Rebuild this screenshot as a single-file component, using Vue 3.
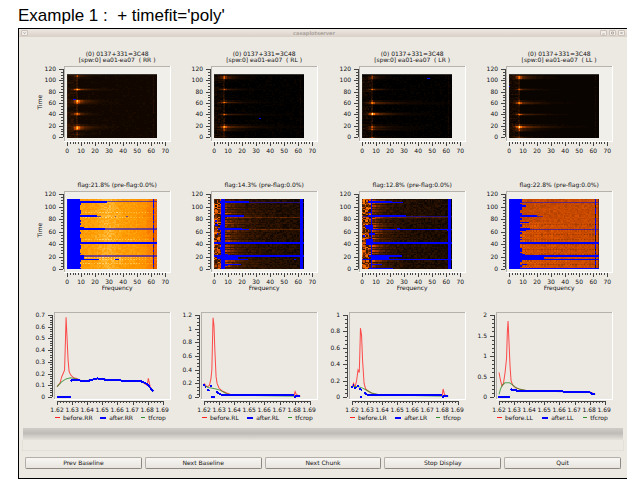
<script setup>
const CHANNELS = 64;
const ROWS = 56; // two time steps per drawn row

const range = (from, to, step) => {
  const arr = [];
  for (let i = 0; i <= Math.round((to - from) / step); i++) {
    arr.push(from + i * step);
  }
  return arr;
};

const noise = (a, b, seed) => {
  const v = Math.sin(a * 12.9898 + b * 78.233 + seed * 37.719) * 43758.5453;
  return v - Math.floor(v);
};

// black -> brown -> orange -> pale yellow
const stops = [
  [0, 0, 0, 0],
  [0.3, 84, 34, 0],
  [0.5, 200, 72, 0],
  [0.65, 250, 112, 0],
  [0.8, 255, 158, 0],
  [1, 255, 250, 190],
];
const heatColor = (value) => {
  const v = Math.min(1, Math.max(0, value));
  let i = 1;
  while (i < stops.length - 1 && stops[i][0] < v) i++;
  const a = stops[i - 1];
  const b = stops[i];
  const k = (v - a[0]) / (b[0] - a[0]);
  const mix = (n) => Math.round(a[n] + (b[n] - a[n]) * k);
  return `rgb(${mix(1)},${mix(2)},${mix(3)})`;
};

// cells with the same level share one path
const paint = (valueAt) => {
  const levels = {};
  for (let r = 0; r < ROWS; r++) {
    for (let c = 0; c < CHANNELS; c++) {
      const v = valueAt(c, 111 - r * 2, r);
      const level = Math.round(Math.min(1, Math.max(0, v)) * 32);
      levels[level] = (levels[level] || "") + `M${c} ${r}h1v1h-1z`;
    }
  }
  return Object.keys(levels).map((level) => ({
    fill: heatColor(level / 32),
    d: levels[level],
  }));
};

// sources: [time, strength, reach in channels]
const rawValue = (base, sources, seed) => (c, t, r) => {
  let v = base + (noise(c, r, seed) - 0.5) * 0.02;
  if (c < 6) v += noise(c, r, seed + 1) * 0.12 * (noise(r, 2, seed) + 0.2);
  if (c >= 6 && c <= 7) v += 0.04 + noise(c, r, seed + 2) * 0.14;
  if (c === 61) v += noise(c, r, seed) * 0.08;
  sources.forEach(([time, strength, reach]) => {
    const near = Math.abs(t - time);
    if (near > 3) return;
    const fade = near <= 1 ? 1 : 0.3;
    const d = Math.abs(c - 7);
    v += strength * fade * (d < 2 ? 1 - d * 0.25 : 0);
    if (d >= 2) v += strength * fade * 0.5 * Math.exp(-(d - 2) / (c < 7 ? 2 : reach));
  });
  return v;
};

const brightValue = (c, t, r) => {
  let v = 0.79 + (noise(c, r, 5) - 0.5) * 0.06;
  v += 0.05 * Math.exp(-Math.pow((c - 29) / 8, 2));
  if (c > 46) v -= (c - 46) * 0.004;
  if (c > 56) v -= 0.03;
  if (c === 61) v -= 0.3;
  if (c >= 62) v -= 0.08;
  if ([9, 15, 19, 47, 64, 83, 91].some((n) => Math.abs(t - n) < 1) && c % 2) v += 0.08;
  return v;
};

const darkValue = (seed, glow) => (c, t, r) => {
  if (c < 6) return 0.12 + noise(c, r, seed) * 0.58;
  let v = 0.04 + noise(c, r, seed) * 0.12;
  v += (r % 2 ? 0.42 : 0.22) * Math.exp(-(c - 7) / glow) * (0.6 + noise(r, 1, seed) * 0.5);
  if ((Math.abs(t - 63) < 1 || Math.abs(t - 83) < 1) && c > 8) v += 0.18;
  if (c > 61) v -= 0.06;
  return v;
};

const rustValue = (c, t, r) => {
  let v = 0.5 + (noise(c, r, 8) - 0.5) * 0.06;
  if (t < 76 && (c + r) % 2) v += 0.08 * Math.exp(-(c - 8) / 25);
  if (t < 76 && r % 4 === 0 && c % 2) v -= 0.08;
  if (c === 61) v -= 0.3;
  if (c >= 63) v -= 0.14;
  return v;
};

const dashes = (seed, density) =>
  range(0, 110, 2)
    .filter((t) => noise(t, 3, seed) < density)
    .map((t) => [61, t, 1, 3]);

const ragged = (from, size, seed) =>
  range(0, 110, 2).map((t) => [from, t, Math.round(noise(t, 7, seed) * size), 2]);

const rawPanels = [
  {
    corr: "RR",
    cells: paint(rawValue(0.07, [[108, 0.25, 5], [85, 0.75, 7], [65, 0.55, 7], [62, 0.4, 6], [42, 0.5, 4], [20, 0.6, 8], [16, 0.5, 5], [7, 0.15, 4]], 1)),
    marks: [[4, 67, 2, 2]],
  },
  {
    corr: "RL",
    cells: paint(rawValue(0.01, [[106, 0.45, 7], [85, 0.45, 8], [63, 0.6, 10], [41, 0.5, 13], [20, 0.7, 14], [14, 0.3, 8], [3, 0.1, 4]], 2)),
    marks: [[32, 33, 1, 2]],
  },
  {
    corr: "LR",
    cells: paint(rawValue(0.01, [[106, 0.25, 5], [85, 0.5, 6], [62, 0.6, 15], [42, 0.85, 10], [20, 0.4, 11], [15, 0.4, 11], [1, 0.3, 4]], 3)),
    marks: [[46, 103, 2, 2]],
  },
  {
    corr: "LL",
    cells: paint(rawValue(0.03, [[106, 0.55, 8], [85, 0.45, 8], [62, 0.6, 11], [41, 0.6, 13], [20, 0.85, 13], [14, 0.35, 8], [1, 0.3, 6]], 4)),
    marks: [[0, 89, 1, 2]],
  },
];

// flags and faint: [channel, time, channels, time steps]
const flagPanels = [
  {
    flag: "21.8",
    cells: paint(brightValue),
    flags: [
      [0, 0, 9, 112], ...ragged(9, 1, 11), [9, 106, 19, 3], [28, 107, 36, 1],
      [9, 84, 12, 2], [9, 62, 18, 4], [9, 65, 3, 2], [9, 41, 55, 2], [9, 43, 6, 1],
      [9, 17, 3, 6], [9, 14, 14, 2], [34, 14, 3, 2], [9, 8, 8, 1], ...dashes(12, 0.4),
      [61, 98, 1, 14],
    ],
    faint: [[28, 107, 36, 2], [21, 83, 3, 2], [34, 83, 1, 2], [42, 83, 1, 2], [27, 63, 37, 3], [12, 20, 52, 2]],
  },
  {
    flag: "14.3",
    cells: paint(darkValue(6, 14)),
    flags: [
      [5, 0, 3, 112], [61, 0, 2, 112], [4, 106, 21, 3], [8, 84, 13, 2], [8, 83, 8, 2],
      [3, 63, 17, 2], [6, 62, 19, 2], [4, 65, 4, 5], [1, 69, 2, 3], [0, 41, 64, 3],
      [8, 40, 23, 2], [4, 30, 2, 5], [0, 20, 64, 2], [8, 22, 2, 2], [2, 16, 15, 4],
      [6, 14, 18, 2], [57, 14, 1, 2], [5, 7, 14, 2], [8, 5, 2, 2], [1, 76, 1, 3], [2, 54, 1, 3],
    ],
    faint: [[25, 106, 39, 1], [4, 86, 4, 2]],
  },
  {
    flag: "12.8",
    cells: paint(darkValue(7, 9)),
    flags: [
      [6, 0, 1, 112], [61, 0, 2, 112], [4, 106, 17, 3], [21, 105, 8, 2], [32, 105, 3, 1],
      [4, 84, 27, 2], [3, 64, 5, 6], [5, 62, 19, 2], [25, 63, 2, 2], [27, 62, 37, 2],
      [60, 61, 3, 3], [5, 55, 4, 3], [3, 38, 5, 10], [7, 40, 7, 4], [12, 41, 52, 2],
      [5, 20, 23, 2], [6, 16, 13, 4], [0, 14, 64, 2], [7, 7, 7, 1], [5, 0, 17, 2],
      [4, 90, 3, 2], [1, 52, 1, 2], [2, 67, 1, 3],
    ],
    faint: [[0, 83, 64, 2], [22, 19, 42, 1]],
  },
  {
    flag: "22.8",
    cells: paint(rustValue),
    flags: [
      [0, 0, 8, 112], ...ragged(8, 1, 14), [9, 100, 3, 2], [8, 84, 12, 3], [8, 73, 6, 2],
      [8, 61, 4, 5], [8, 62, 7, 3], [8, 40, 56, 4], [8, 19, 56, 3], [8, 14, 3, 10],
      [8, 16, 17, 4], [8, 14, 56, 2], [9, 6, 4, 2], [0, 0, 64, 2], [61, 61, 1, 10],
      [61, 34, 1, 8], ...dashes(15, 0.4),
    ],
    faint: [[8, 106, 56, 1], [20, 83, 4, 2], [10, 62, 54, 2]],
  },
];

const linePanels = [
  {
    corr: "RR",
    max: 0.7,
    step: 0.1,
    minor: 0.02,
    before: [[0, 0.09], [2, 0.12], [3, 0.17], [4, 0.2], [5, 0.23], [5.5, 0.46], [6, 0.68], [6.6, 0.52], [7.3, 0.32], [8, 0.22], [9, 0.19], [11, 0.165], [13, 0.16], [16, 0.14], [21, 0.145], [27, 0.16], [33, 0.15], [46, 0.14], [56, 0.135], [60, 0.1], [60.7, 0.16], [62, 0.09], [64, 0.05]],
    after: [
      [[0, 0], [9, 0]],
      [[9, 0.135], [10, 0.145], [13, 0.15], [16, 0.138], [21, 0.14], [24, 0.15], [27, 0.16], [33, 0.148], [38, 0.15], [46, 0.135], [56, 0.135], [58, 0.125], [60, 0.11], [62, 0.08], [64, 0.05]],
    ],
    fit: [[0, 0.09], [3, 0.13], [6, 0.155], [9, 0.165], [13, 0.155], [16, 0.14], [21, 0.145], [27, 0.16], [33, 0.15], [46, 0.14], [56, 0.135], [60, 0.11], [64, 0.05]],
  },
  {
    corr: "RL",
    max: 1.2,
    step: 0.2,
    minor: 0.05,
    before: [[0, 0.2], [2, 0.15], [3.5, 0.17], [4.5, 0.26], [5.2, 0.4], [5.6, 0.8], [6, 1.16], [6.6, 1.05], [7.2, 0.68], [8, 0.3], [8.7, 0.2], [10, 0.13], [12, 0.09], [15, 0.06], [18, 0.035], [22, 0.03], [60, 0.025], [60.6, 0.08], [61.4, 0.04], [64, 0.01]],
    after: [
      [[-0.5, 0.18], [0.5, 0.18]], [[0.5, 0.15], [1.5, 0.15]], [[2, 0.1], [3.5, 0.11]], [[4, 0.16], [5, 0.16]],
      [[4.5, 0], [7.5, 0]], [[8, 0.08], [9.5, 0.06], [11, 0.04], [13, 0.03], [60, 0.025]], [[60, 0], [61, 0.01], [64, 0.01]],
    ],
    fit: [[0, 0.17], [3, 0.14], [8, 0.12], [11, 0.1], [15, 0.05], [18, 0.035], [22, 0.03], [64, 0.015]],
  },
  {
    corr: "LR",
    max: 1,
    step: 0.2,
    minor: 0.05,
    before: [[0, 0.12], [1, 0.17], [2, 0.12], [3, 0.2], [4, 0.33], [4.8, 0.3], [5.2, 0.55], [5.6, 0.84], [6.3, 0.75], [7, 0.45], [7.5, 0.3], [8, 0.17], [9, 0.1], [11, 0.07], [14, 0.04], [18, 0.03], [60, 0.02], [60.6, 0.1], [61.5, 0.03], [64, 0.01]],
    after: [
      [[-0.5, 0.12], [0.5, 0.12]], [[0.5, 0.15], [1.5, 0.15]], [[1.5, 0.11], [3, 0.12]], [[3.5, 0.13], [4.5, 0.13]], [[4.5, 0.1], [6.5, 0.09]],
      [[5.5, 0], [6.5, 0]], [[8, 0.06], [10, 0.03], [13, 0.022], [60, 0.025]], [[60, 0], [61, 0.01], [64, 0.01]],
    ],
    fit: [[0, 0.13], [4, 0.13], [7, 0.11], [10, 0.08], [13, 0.05], [18, 0.03], [64, 0.01]],
  },
  {
    corr: "LL",
    max: 2,
    step: 0.5,
    minor: 0.1,
    before: [[0, 0.6], [1, 0.4], [2, 0.27], [3, 0.35], [4, 0.6], [5, 0.95], [5.5, 1.6], [6, 1.85], [6.7, 1.3], [7.3, 0.75], [8, 0.4], [9, 0.3], [11, 0.23], [14, 0.19], [18, 0.16], [36, 0.14], [60, 0.13], [62, 0.1], [64, 0.07]],
    after: [
      [[-0.5, 0], [7, 0]],
      [[7.5, 0.2], [9, 0.17], [12, 0.16], [18, 0.14], [40, 0.14], [60, 0.13], [62, 0.08], [64, 0.07]],
    ],
    fit: [[0, 0.07], [1, 0.2], [2, 0.28], [4, 0.35], [7, 0.35], [9, 0.3], [11, 0.24], [14, 0.19], [18, 0.16], [36, 0.14], [60, 0.13], [64, 0.06]],
  },
];

// axes of the two rows of images
const heatRows = [
  { kind: "raw", panels: rawPanels, height: 126, frame: [29, 75], image: [37, 64], zero: 100, unit: 68 / 120, axis: 105, label: 116, time: 65 },
  { kind: "flag", panels: flagPanels, height: 134, frame: [28, 81], image: [36, 70], zero: 106, unit: 75 / 120, axis: 110, label: 121, time: 67 },
];
const timeMajor = range(0, 120, 20);
const timeMinor = range(0, 120, 5);
const channelMajor = range(0, 70, 10);
const channelMinor = range(0, 70, 2);

const ticksX = (values, y, length, x0, unit) =>
  values.map((v) => `M${Math.round(x0 + v * unit)} ${y}v${length}`).join("");
const ticksY = (values, x, length, y0, unit) =>
  values.map((v) => `M${x} ${Math.round(y0 - v * unit)}h${-length}`).join("");

const lineX = (channel) => 29 + channel * 1.5;
const lineY = (value, max) => 100 - (value / max) * 82;
const toPoints = (points, max) =>
  points.map(([c, v]) => `${lineX(c).toFixed(1)},${lineY(v, max).toFixed(1)}`).join(" ");
const freqLabels = ["1.62", "1.63", "1.64", "1.65", "1.66", "1.67", "1.68", "1.69"];

const buttons = ["Prev Baseline", "Next Baseline", "Next Chunk", "Stop Display", "Quit"];
</script>

<template>
  <div class="page">
    <h1 class="heading">Example 1 :&nbsp; + timefit='poly'</h1>
    <main class="window">
      <header class="titlebar">
        <button class="win-btn" aria-label="Menu">
          <svg viewBox="0 0 6 6"><path d="M1.5 2L3 4L4.5 2" /></svg>
        </button>
        <span class="title">casaplotserver</span>
        <div class="win-group">
          <button class="win-btn" aria-label="Minimize">
            <svg viewBox="0 0 6 6"><path d="M1 4.5H5" /></svg>
          </button>
          <button class="win-btn" aria-label="Maximize">
            <svg viewBox="0 0 6 6"><path d="M1.5 1.5H4.5V4.5H1.5Z" /></svg>
          </button>
          <button class="win-btn" aria-label="Close">
            <svg viewBox="0 0 6 6"><path d="M1.5 1.5L4.5 4.5M4.5 1.5L1.5 4.5" /></svg>
          </button>
        </div>
      </header>

      <section class="plots">
        <template v-for="row in heatRows" :key="row.kind">
          <svg
            v-for="(panel, index) in row.panels"
            :key="row.kind + index"
            class="plot"
            :viewBox="`0 0 147 ${row.height}`"
          >
            <template v-if="row.kind === 'raw'">
              <text class="mid" x="89" y="19">(0) 0137+331=3C48</text>
              <text class="mid" x="89" y="25">[spw:0] ea01-ea07&nbsp; ( {{ panel.corr }} )</text>
            </template>
            <text v-else class="mid" x="89" y="24">flag:{{ panel.flag }}% (pre-flag:0.0%)</text>
            <text
              v-if="index === 0"
              class="mid"
              :transform="`translate(14 ${row.time}) rotate(-90)`"
            >Time</text>

            <rect class="inner" x="36" :y="row.frame[0]" width="106" :height="row.frame[1]" />
            <path class="lit" :d="`M36 ${row.frame[0] + row.frame[1]}h106v${-row.frame[1]}`" />
            <path class="shade" :d="`M36 ${row.frame[0] + row.frame[1]}v${-row.frame[1]}h106`" />

            <svg
              x="39"
              :y="row.image[0]"
              width="90"
              :height="row.image[1]"
              viewBox="0 0 64 112"
              preserveAspectRatio="none"
              class="image"
            >
              <g transform="scale(1 2)">
                <path v-for="cell in panel.cells" :key="cell.fill" :d="cell.d" :fill="cell.fill" />
              </g>
              <rect v-if="row.kind === 'raw'" width="64" height="1" class="edge" />
              <rect
                v-for="(box, n) in panel.faint"
                :key="'faint' + n"
                class="faint"
                :x="box[0]"
                :y="112 - box[1] - box[3]"
                :width="box[2]"
                :height="box[3]"
              />
              <rect
                v-for="(box, n) in panel.flags || panel.marks"
                :key="'flag' + n"
                class="flagged"
                :x="box[0]"
                :y="112 - box[1] - box[3]"
                :width="box[2]"
                :height="box[3]"
              />
            </svg>

            <path class="axis" :d="`M35 ${row.zero}V${Math.round(row.zero - 120 * row.unit)}`" />
            <path class="axis" :d="ticksY(timeMajor, 35, 4, row.zero, row.unit)" />
            <path class="axis" :d="ticksY(timeMinor, 35, 2, row.zero, row.unit)" />
            <path class="axis" :d="ticksX(channelMajor, row.axis, 4, 39, 1.4)" />
            <path class="axis" :d="ticksX(channelMinor, row.axis, 2, 39, 1.4)" />
            <text
              v-for="t in timeMajor"
              :key="'t' + t"
              class="end"
              x="28"
              :y="Math.round(row.zero - t * row.unit) + 2"
            >{{ t }}</text>
            <text
              v-for="c in channelMajor"
              :key="'c' + c"
              class="mid"
              :x="39 + c * 1.4"
              :y="row.label"
            >{{ c }}</text>
            <text v-if="row.kind === 'flag'" class="mid" x="89" y="127">Frequency</text>
          </svg>
        </template>

        <svg v-for="panel in linePanels" :key="panel.corr" class="plot" viewBox="0 0 147 130">
          <path class="lit" d="M26 102h116v-87" />
          <path class="shade" d="M26 102v-87h116" />
          <polyline class="before" :points="toPoints(panel.before, panel.max)" />
          <polyline class="fit" :points="toPoints(panel.fit, panel.max)" />
          <polyline
            v-for="(part, n) in panel.after"
            :key="n"
            class="after"
            :points="toPoints(part, panel.max)"
          />

          <path class="axis" d="M24 100V18M29 104H135" />
          <path class="axis" :d="ticksY(range(0, panel.max, panel.step), 24, 4, 100, 82 / panel.max)" />
          <path class="axis" :d="ticksY(range(0, panel.max, panel.minor), 24, 2, 100, 82 / panel.max)" />
          <path class="axis" :d="ticksX(range(0, 7, 1), 104, 4, 29, 15.1)" />
          <path class="axis" :d="ticksX(range(0, 35, 1), 104, 2, 29, 3.02)" />
          <text
            v-for="v in range(0, panel.max, panel.step)"
            :key="v"
            class="end"
            x="17"
            :y="Math.round(lineY(v, panel.max)) + 2"
          >{{ Number(v.toFixed(1)) }}</text>
          <text
            v-for="(label, n) in freqLabels"
            :key="label"
            class="mid"
            :x="29 + n * 15"
            y="115"
          >{{ label }}</text>

          <rect class="key-before" x="27" y="120" width="5" height="1" />
          <text x="35" y="123">before.{{ panel.corr }}</text>
          <rect class="key-after" x="72" y="120" width="6" height="2" />
          <text x="81" y="123">after.{{ panel.corr }}</text>
          <rect class="key-fit" x="113" y="120" width="4" height="1" />
          <text x="120" y="123">tfcrop</text>
        </svg>
      </section>

      <div class="splitter"></div>
      <div class="status"></div>
      <footer class="actions">
        <button v-for="label in buttons" :key="label" class="action">{{ label }}</button>
      </footer>
    </main>
  </div>
</template>

<style>
body {
  margin: 0;
  background: #fff;
}
</style>

<style scoped>
.page {
  padding: 0 13px 0 18px;
  font-family: "DejaVu Sans", sans-serif;
  font-size: 6px;
  color: #111;
}

.heading {
  margin: 0;
  padding-top: 6px;
  height: 22px;
  font: 17px/20px "Liberation Sans", sans-serif;
  color: #000;
}

.window {
  border: 1px solid #000;
  border-right: 0;
  background: #ece9e3;
}

.titlebar {
  display: flex;
  align-items: center;
  justify-content: space-between;
  height: 8px;
  padding: 0 2px;
  background: linear-gradient(#eee8e2, #d9d0c8);
}

.title {
  color: #aaa39c;
  font-weight: bold;
  font-size: 5px;
  line-height: 8px;
}

.win-group {
  display: flex;
  gap: 2px;
}

.win-btn {
  width: 7px;
  height: 6px;
  padding: 0;
  border: 1px solid #c9c1ba;
  border-radius: 1px;
  background: #f1ece7;
}

.win-btn svg {
  display: block;
  width: 100%;
  height: 100%;
  fill: none;
  stroke: #958e88;
}

.plots {
  display: grid;
  grid-template-columns: repeat(4, 1fr);
  padding: 0 10px 0 9px;
}

.plot {
  display: block;
  width: 100%;
}

.plot text {
  font-size: 6px;
  fill: #111;
}

.plot .mid {
  text-anchor: middle;
}

.plot .end {
  text-anchor: end;
}

.plot path,
.plot polyline,
.plot rect {
  shape-rendering: crispEdges;
}

.inner {
  fill: #f1efea;
}

.lit,
.shade,
.axis,
.before,
.after,
.fit {
  fill: none;
  stroke-width: 1px;
}

.lit {
  stroke: #fff;
}

.shade {
  stroke: #b5b2ad;
}

.axis {
  stroke: #444;
}

.plot .before,
.plot .fit {
  shape-rendering: auto;
  stroke-opacity: 0.8;
}

.before {
  stroke: #ff2020;
}

.after {
  stroke: #0000ff;
  stroke-width: 2px;
}

.fit {
  stroke: #2f8f2f;
}

.key-before {
  fill: #ff2020;
}

.key-after {
  fill: #0000ff;
}

.key-fit {
  fill: #2f8f2f;
}

.edge {
  fill: #3a3733;
}

.flagged {
  fill: #0000ff;
}

.faint {
  fill: #2a12c0;
  fill-opacity: 0.65;
}

.splitter {
  height: 12px;
  margin: 0 4px;
  background: linear-gradient(#cfccc7, #bfbbb6 45%, #e6e3dd);
}

.status {
  height: 10px;
  margin: 0 3px;
  border: 1px solid #e3e0da;
  border-top: 0;
}

.actions {
  display: grid;
  grid-template-columns: repeat(5, 1fr);
  gap: 3px;
  padding: 6px 6px 9px;
}

.action {
  height: 12px;
  padding: 0;
  border: 1px solid #b3afa8;
  border-right-color: #8d8982;
  border-bottom-color: #8d8982;
  border-radius: 2px;
  background: linear-gradient(#f8f6f3, #e8e5df);
  font: 6px/10px "DejaVu Sans", sans-serif;
  color: #111;
}
</style>
